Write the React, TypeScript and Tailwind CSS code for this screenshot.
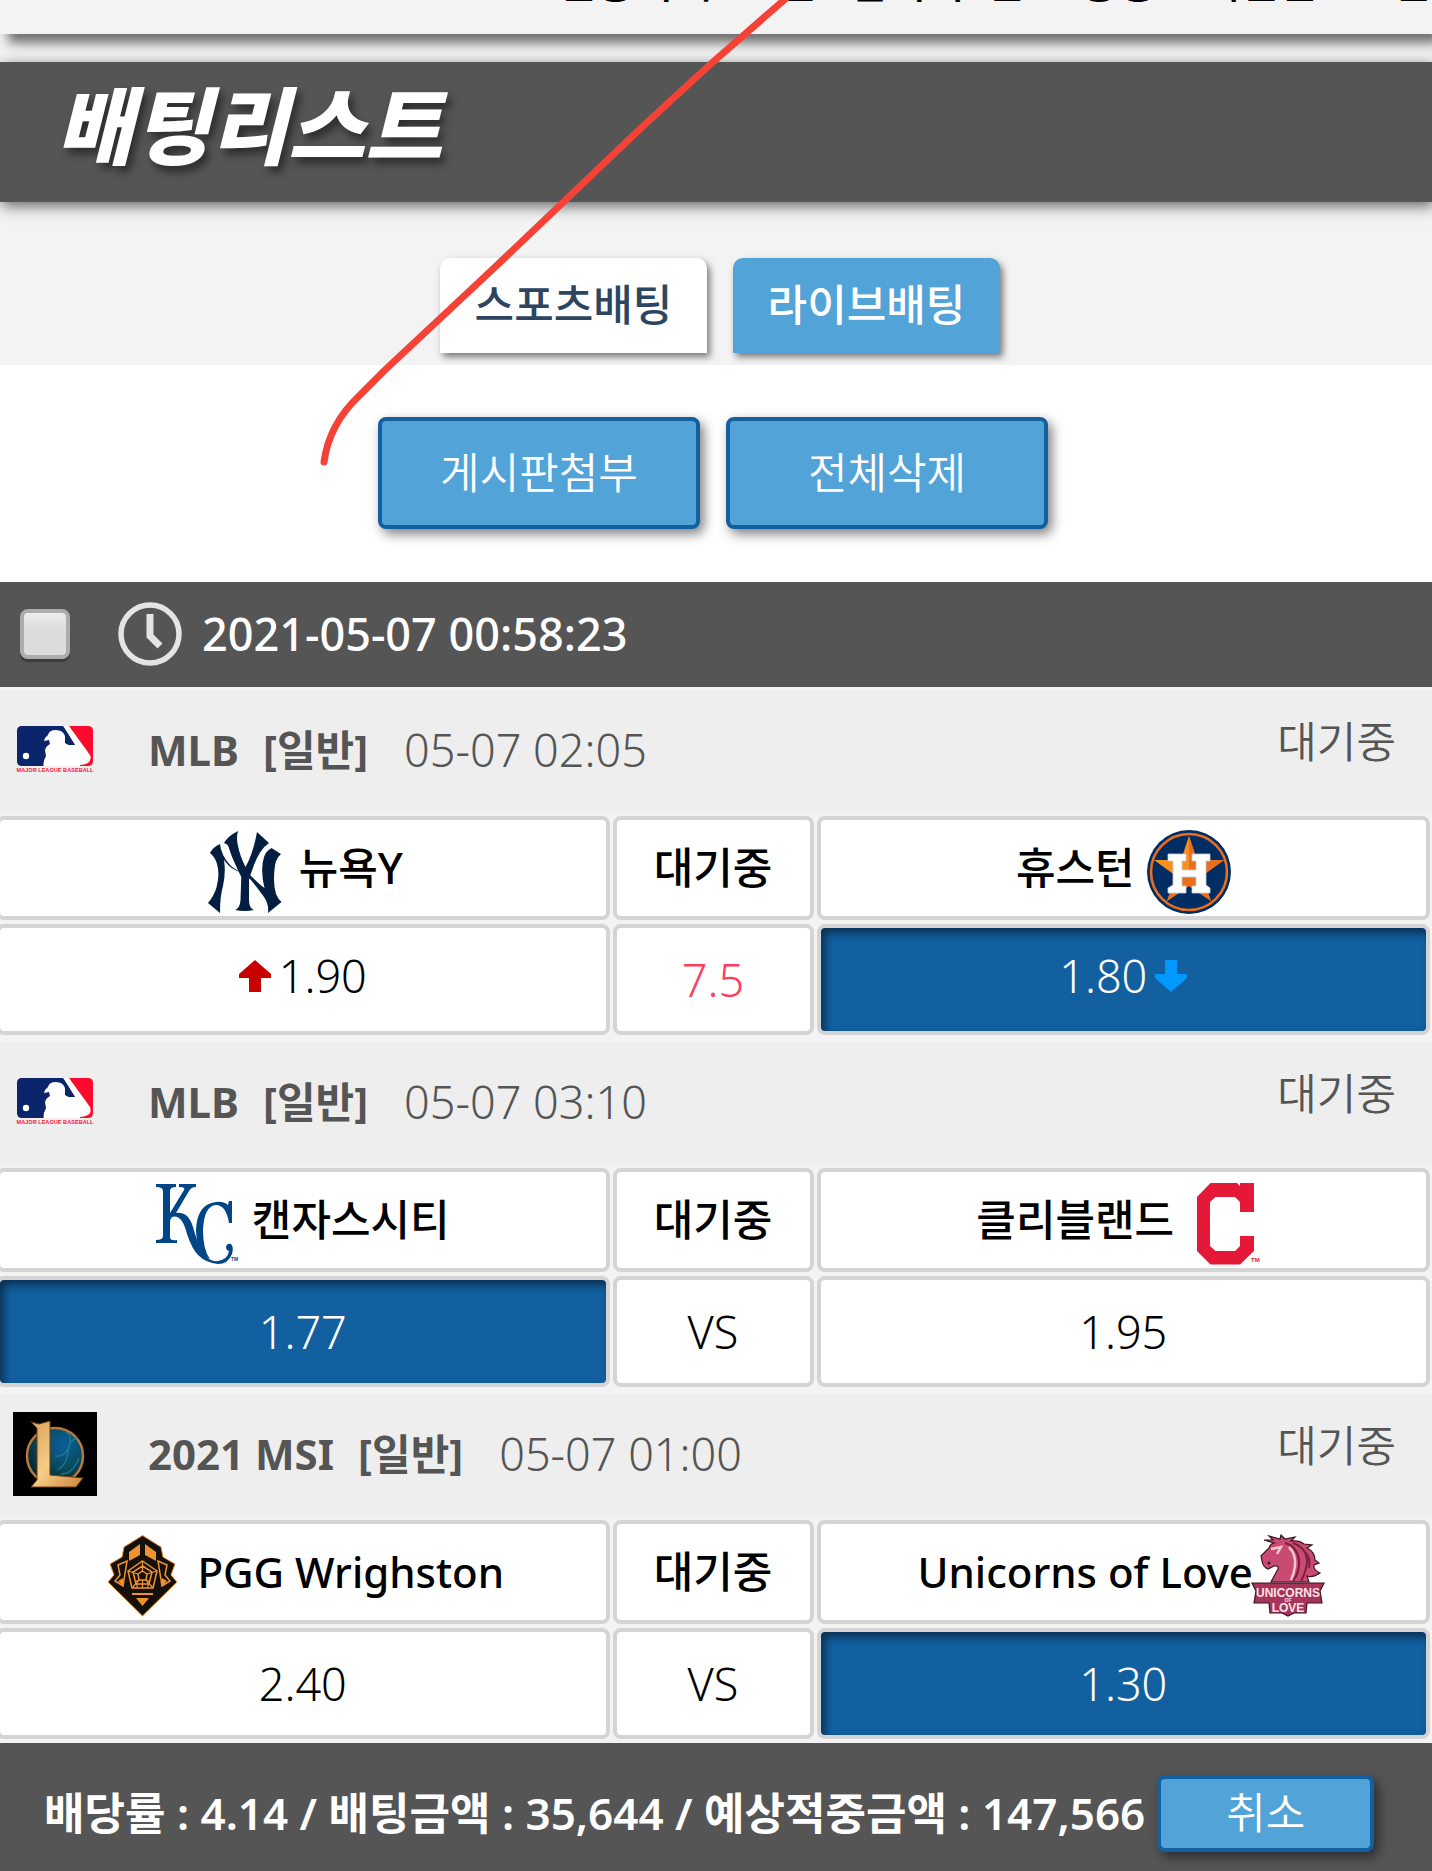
import type { ReactNode } from "react";

type Pick = "home" | "away";

interface Match {
  id: number;
  logo: ReactNode;
  league: string;
  startAt: string;
  home: { name: string; logo: ReactNode; odds: string; trend?: "up" | "down" };
  away: { name: string; logo: ReactNode; odds: string; trend?: "up" | "down"; tight?: boolean };
  line: string;
  isHandicap?: boolean;
  picked: Pick;
}

function MlbLogo() {
  return (
    <svg viewBox="-4 -18 84 84" className="size-[84px] shrink-0" role="img" aria-label="MLB">
      <path d="M5 0H48L73 31Q75 37 69 40H5Q0 40 0 35V5Q0 0 5 0Z" fill="#0a2569" />
      <path d="M51 0H71Q76 0 76 5V35Q76 40 71 40H62Z" fill="#ff0a2f" />
      <path d="M46 0H52L73 29Q75 34 71 37Q67 39 63 39V40H26.500Q26 35 29 30L28 24Q29 20 33 18L32 14L27 15Q28 11 31 9Q32 4 39 4Q46 4 48 10L48 17L52 19H58Z" fill="#fff" />
      <path d="M46 0L58 19H52Q49 18 48 16L50 9Z" fill="#0a2569" />
      <circle cx="9" cy="30" r="3.2" fill="#fff" />
      <text x="38" y="46" textAnchor="middle" fontSize="5.600" className="font-['Liberation_Sans',sans-serif] font-bold" fill="#f0203c">
        MAJOR LEAGUE BASEBALL
      </text>
    </svg>
  );
}

function LolLogo() {
  return (
    <svg viewBox="0 0 84 84" className="size-[84px] shrink-0" role="img" aria-label="LoL">
      <defs>
        <linearGradient id="lolGold" x1="0" y1="0" x2="1" y2="1">
          <stop offset="0" stopColor="#d9a05c" />
          <stop offset="0.5" stopColor="#f6cd84" />
          <stop offset="1" stopColor="#c9853a" />
        </linearGradient>
        <radialGradient id="lolSea" cx="0.65" cy="0.3" r="0.8">
          <stop offset="0" stopColor="#0b5f9b" />
          <stop offset="0.5" stopColor="#0a4a5e" />
          <stop offset="1" stopColor="#032027" />
        </radialGradient>
      </defs>
      <rect width="84" height="84" fill="#000" />
      <circle cx="42" cy="44" r="28" fill="url(#lolSea)" stroke="#b9783c" strokeWidth="2.500" />
      <path d="M45 58Q54 52 55 40T64 26M42 44Q52 46 56 34T52 20M48 62Q60 62 66 46" fill="none" stroke="#1c8a97" strokeWidth="1.500" opacity="0.7" />
      <path d="M18 10L26 12L37 9V63L70 66L63 75H18L24 68V16Z" fill="url(#lolGold)" stroke="#6b3c14" strokeWidth="1" />
    </svg>
  );
}

function YankeesLogo() {
  return (
    <svg viewBox="0 0 84 84" className="size-[84px] shrink-0" fill="#041e42" aria-hidden="true">
      <path d="M35 1Q33 8 35 16Q37 26 42.500 37Q50 24 54 2L66 13Q57 19 51 35L47 46Q46 47 46 50V70Q46 78 51 80Q42 82 32 80Q37 78 37.500 70L38.300 47Q28 26 26 18Q25 14 21 13Q25 6 35 1Z" />
      <path d="M17 14Q18 25 27 35Q34 42 46 44Q56 54 61.500 58Q57 40 61 27Q63 21 68.500 18L78 24Q72 29 71.500 40Q70 54 73 64Q75 69 78.500 72L65 83Q66 74 61 67Q56 60 48 50L38 42Q28 40 21 30Q23 42 20 56Q17 66 17 83L5 73Q11 66 13.600 57Q17 44 14 34Q12 27 7 23Q10 17 17 14Z" />
    </svg>
  );
}

function AstrosLogo() {
  return (
    <svg viewBox="0 0 84 84" className="size-[84px] shrink-0" aria-hidden="true">
      <circle cx="42" cy="42" r="42" fill="#002d62" />
      <circle cx="42" cy="42" r="38" fill="none" stroke="#eb6e1f" strokeWidth="2.600" />
      <path d="M42 6L50 30H77L55 46L64 71L42 56L20 71L29 46L7 30H34Z" fill="#f7911e" />
      <path d="M42 6L50 30H77L55 46L64 71L42 56ZM29 46L20 71L42 56V46Z" fill="#eb6e1f" />
      <path d="M21 24H39V31H35V40H49V31H45V24H63V31H59V55L63 58V63H45V56H49V47H35V56H39V63H21V58L26 55V31H21Z" fill="#fff" stroke="#c4ced4" strokeWidth="0.800" />
    </svg>
  );
}

function RoyalsLogo() {
  return (
    <svg viewBox="0 0 84 84" className="size-[84px] shrink-0" fill="#004687" aria-hidden="true">
      <path d="M0 2H20V5Q14 5 14 9V31L28 8Q30 5 23 5V2H40V5Q35 5 33 9L20 31Q32 29 37 45Q43 67 49 73Q54 80 62 79Q72 77 73 69Q70 68 70 65Q71 61 75 62Q78 65 76 72Q72 82 62 82Q50 81 42 73Q36 67 31 52Q26 32 16 35Q14 37 14 41V55Q14 59 21 58V61H0V58Q7 58 7 54V9Q7 5 0 5Z" />
      <path d="M76 19V41H73Q70 23 60 23Q48 24 47 48Q47 68 54 77L48 74Q40 64 40 48Q41 22 60 20Q67 19 72 23L73 19Z" />
      <text x="75" y="79" fontSize="5" className="font-['Liberation_Sans',sans-serif] font-bold">TM</text>
    </svg>
  );
}

function ClevelandLogo() {
  return (
    <svg viewBox="0 0 84 84" className="size-[84px] shrink-0" fill="#e31937" aria-hidden="true">
      <path d="M11 15L24.500 1H51L54 4V1H68V30H54V20L49 15H29.500L24 20V64L29.500 69H49L54 64V54H68V69L54 82.500H24.500L11 69Z" />
      <text x="65" y="80" fontSize="6" className="font-['Liberation_Sans',sans-serif] font-bold">TM</text>
    </svg>
  );
}

function PggLogo() {
  return (
    <svg viewBox="0 0 84 84" className="size-[84px] shrink-0" fill="none" stroke="#ef9331" aria-hidden="true">
      <path d="M41.500 1.500L60 13L62 23L74 30L70 41L76 48L41.500 82L7 48L13 41L9 30L21 23L23 13Z" fill="#15100c" strokeWidth="1" />
      <path d="M28 18L39 10V21L28 27ZM55 18L44 10V21L55 27Z" fill="#ef9331" stroke="none" />
      <path d="M17 31L26 27L22 52L14 47L19 41ZM66 31L57 27L61 52L69 47L64 41Z" strokeWidth="1.500" />
      <path d="M17 47L22 44V52ZM66 47L61 44V52Z" fill="#ef9331" stroke="none" />
      <path d="M41.500 27L56 37L52 54H31L27 37ZM41.500 32L51 38L48 50H35L32 38ZM41.500 37L46 40L45 46H38L37 40Z" strokeWidth="1.500" />
      <path d="M41.500 27V37M27 37L37 40M56 37L46 40M31 54L38 46M52 54L45 46M36 46V54M41.500 46V54M47 46V54" strokeWidth="1.200" />
      <path d="M31 60H52" strokeWidth="2" />
      <path d="M35 64H48L41.500 72Z" fill="#ef9331" stroke="none" />
    </svg>
  );
}

function UnicornsLogo() {
  return (
    <svg viewBox="0 0 84 84" className="size-[84px] shrink-0" aria-hidden="true">
      <path d="M13 27L12 22L20 14Q21 10 25 9L15 6L24 6L20 2L31 5L32 1L36 5L46 3L42 7Q50 6 55 10L63 11L58 14Q66 18 66 26L70 29L65 31Q64 36 71 39Q64 44 58 42L60 48H22L29 35Q30 31 25 32L19 35Q14 33 13 27Z" fill="#c94b72" stroke="#3c1322" strokeWidth="1.200" />
      <path d="M36 9Q48 12 50 26Q51 38 44 47M44 9Q58 14 58 28Q57 38 52 47M56 18Q62 24 60 34" fill="none" stroke="#7d1f3f" strokeWidth="2" />
      <path d="M40 13Q47 20 46 32Q45 40 42 46M22 15L32 13L28 20" fill="none" stroke="#f6c3d1" strokeWidth="2.500" />
      <circle cx="20" cy="29" r="1.500" fill="#3c1322" />
      <path d="M3 49H75L71 57L73 69H58L57 79L45 79L39 82L33 79L21 79L20 69H5L7 57Z" fill="#a93459" stroke="#3c1322" strokeWidth="1.200" />
      <text x="39" y="63" textAnchor="middle" fontSize="12" className="font-['Liberation_Sans',sans-serif] font-bold" fill="#fbe3ea">UNICORNS</text>
      <text x="39" y="68" textAnchor="middle" fontSize="5" className="font-['Liberation_Sans',sans-serif] font-bold" fill="#fbe3ea">OF</text>
      <text x="39" y="78" textAnchor="middle" fontSize="12" className="font-['Liberation_Sans',sans-serif] font-bold" fill="#fbe3ea">LOVE</text>
    </svg>
  );
}

function ClockIcon() {
  return (
    <svg viewBox="0 0 64 64" className="size-16 shrink-0" fill="none" stroke="#e4e4e4" aria-hidden="true">
      <circle cx="32" cy="32" r="29" strokeWidth="5.500" />
      <path d="M32 12V34L42 44" strokeWidth="7" />
    </svg>
  );
}

function Arrow({ dir }: { dir: "up" | "down" }) {
  return dir === "up" ? (
    <svg viewBox="0 0 32 32" className="size-8 shrink-0" role="img" aria-label="상승">
      <path d="M16 0L32 14V18H22V32H10V18H0V14Z" fill="#c80000" />
    </svg>
  ) : (
    <svg viewBox="0 0 32 32" className="size-8 shrink-0" role="img" aria-label="하락">
      <path d="M16 32L32 18V14H22V0H10V14H0V18Z" fill="#0099ff" />
    </svg>
  );
}

const matches: Match[] = [
  {
    id: 1,
    logo: <MlbLogo />,
    league: "MLB",
    startAt: "05-07 02:05",
    home: { name: "뉴욕Y", logo: <YankeesLogo />, odds: "1.90", trend: "up" },
    away: { name: "휴스턴", logo: <AstrosLogo />, odds: "1.80", trend: "down" },
    line: "7.5",
    isHandicap: true,
    picked: "away",
  },
  {
    id: 2,
    logo: <MlbLogo />,
    league: "MLB",
    startAt: "05-07 03:10",
    home: { name: "캔자스시티", logo: <RoyalsLogo />, odds: "1.77" },
    away: { name: "클리블랜드", logo: <ClevelandLogo />, odds: "1.95" },
    line: "VS",
    picked: "home",
  },
  {
    id: 3,
    logo: <LolLogo />,
    league: "2021 MSI",
    startAt: "05-07 01:00",
    home: { name: "PGG Wrighston", logo: <PggLogo />, odds: "2.40" },
    away: { name: "Unicorns of Love", logo: <UnicornsLogo />, odds: "1.30", tight: true },
    line: "VS",
    picked: "away",
  },
];

const cell = "flex items-center justify-center rounded-lg border-4 border-[#d4d4d4] bg-white";
const team = "h-[104px] font-medium";
const odds = "h-[111px] text-[45px] font-light";
const picked = "flex items-center justify-center rounded-lg border-4 border-[#d4d4d4] bg-[#1260a0] text-white shadow-[inset_4px_5px_8px_rgba(0,0,0,0.5)]";

function MatchCard({ m }: { m: Match }) {
  return (
    <section className="pt-[3px]">
      <div className="mb-[3px] flex h-[123px] items-center bg-[#eee] pr-9 pb-1 pl-[13px] text-[#555]">
        {m.logo}
        <strong className="ml-[51px] text-[42px] font-bold">{m.league}</strong>
        <strong className="ml-6 text-[42px] font-bold">[일반]</strong>
        <span className="ml-9 text-[45px] font-light">{m.startAt}</span>
        <span className="ml-auto pb-4 font-[350]">대기중</span>
      </div>
      <div className="-ml-1 mr-[2px] grid grid-cols-[1fr_201px_1fr] gap-x-[3px] gap-y-1 pb-1">
        <div className={`${cell} ${team} gap-3 ${m.away.tight ? "text-[42px]" : ""}`}>
          <span className="pt-2">{m.home.logo}</span>
          {m.home.name}
        </div>
        <div className={`${cell} ${team}`}>대기중</div>
        <div className={`${cell} ${team} ${m.away.tight ? "text-[42px]" : "gap-3"}`}>
          {m.away.name}
          <span className={m.away.tight ? "-mx-1 pt-2" : "pt-2"}>{m.away.logo}</span>
        </div>
        <div className={`${m.picked === "home" ? picked : cell} ${odds} gap-2 ${m.home.trend ? "pb-2" : ""}`}>
          {m.home.trend && <Arrow dir={m.home.trend} />}
          {m.home.odds}
        </div>
        <div className={`${cell} ${odds} ${m.isHandicap ? "text-[#ff3d5e]" : ""}`}>{m.line}</div>
        <div className={`${m.picked === "away" ? picked : cell} ${odds} gap-2 ${m.away.trend ? "pb-2" : ""}`}>
          {m.away.odds}
          {m.away.trend && <Arrow dir={m.away.trend} />}
        </div>
      </div>
    </section>
  );
}

export default function App() {
  const actionBtn =
    "rounded-lg border-4 border-[#1260a0] bg-[#52a3d8] font-[350] text-white shadow-[4px_5px_12px_rgba(0,0,0,0.5)]";

  return (
    <div className="relative overflow-hidden bg-[#f3f3f3] font-['Noto_Sans','Noto_Sans_CJK_KR',sans-serif] text-[43px] leading-[50px] whitespace-nowrap text-black">
      <header className="relative flex h-[34px] items-end justify-end bg-[#f3f3f3] pb-[31px] shadow-[8px_9px_12px_rgba(0,0,0,0.55)]">
        <nav className="text-[42px] leading-[42px] font-medium whitespace-pre">
          {"신용거래      전   점거리  간     공용    게련련       안"}
        </nav>
      </header>

      <div className="mt-7 flex h-[140px] items-center bg-[#555] pb-3 pl-14 shadow-[2px_4px_14px_rgba(0,0,0,0.6)]">
        <h1 className="text-[84px] leading-[100px] font-black text-white italic [text-shadow:4px_6px_8px_rgba(0,0,0,0.5)]">배팅리스트</h1>
      </div>

      <div className="flex justify-center gap-[26px] pt-14 pb-3 pl-2">
        <button type="button" className="h-[95px] w-[267px] rounded-t-[10px] bg-white pb-0.5 font-medium text-[#2c4661] shadow-[3px_4px_7px_rgba(0,0,0,0.5)]">
          스포츠배팅
        </button>
        <button type="button" className="h-[95px] w-[267px] rounded-t-[10px] bg-[#52a3d8] pb-0.5 font-medium text-white shadow-[3px_4px_7px_rgba(0,0,0,0.5)]">
          라이브배팅
        </button>
      </div>

      <div className="flex justify-center gap-[26px] bg-white pt-[52px] pr-1.5 pb-[53px]">
        <button type="button" className={`${actionBtn} h-28 w-[322px]`}>게시판첨부</button>
        <button type="button" className={`${actionBtn} h-28 w-[322px]`}>전체삭제</button>
      </div>

      <div className="flex h-[105px] items-center bg-[#555] pb-0.5 pl-5 text-white">
        <input
          id="bet-20210507"
          type="checkbox"
          className="size-[50px] appearance-none rounded-lg border-4 border-[#adadad] bg-linear-to-b from-[#eee] to-[#dcdcdc] to-40% shadow-[0_3px_1px_rgba(0,0,0,0.3)]"
        />
        <label htmlFor="bet-20210507" className="ml-12 flex items-center gap-5 text-[45px] font-medium">
          <ClockIcon />
          2021-05-07 00:58:23
        </label>
      </div>

      {matches.map((m) => (
        <MatchCard key={m.id} m={m} />
      ))}

      <footer className="flex h-32 items-center bg-[#555] pt-3 pl-11">
        <p className="text-[44px] font-semibold text-white">배당률 : 4.14 / 배팅금액 : 35,644 / 예상적중금액 : 147,566</p>
        <button type="button" className={`${actionBtn} ml-3 h-[77px] w-[217px]`}>취소</button>
      </footer>

      {/* hand-drawn marker line over the page */}
      <svg viewBox="0 0 480 470" className="pointer-events-none absolute top-0 left-[320px] h-[470px] w-[480px]" fill="none" stroke="#f44336" strokeWidth="7" strokeLinecap="round" aria-hidden="true">
        <path d="M471 -6L394 61Q360 92 320 129L173 269L65 370L40 395Q9 424 4 462" />
      </svg>
    </div>
  );
}
